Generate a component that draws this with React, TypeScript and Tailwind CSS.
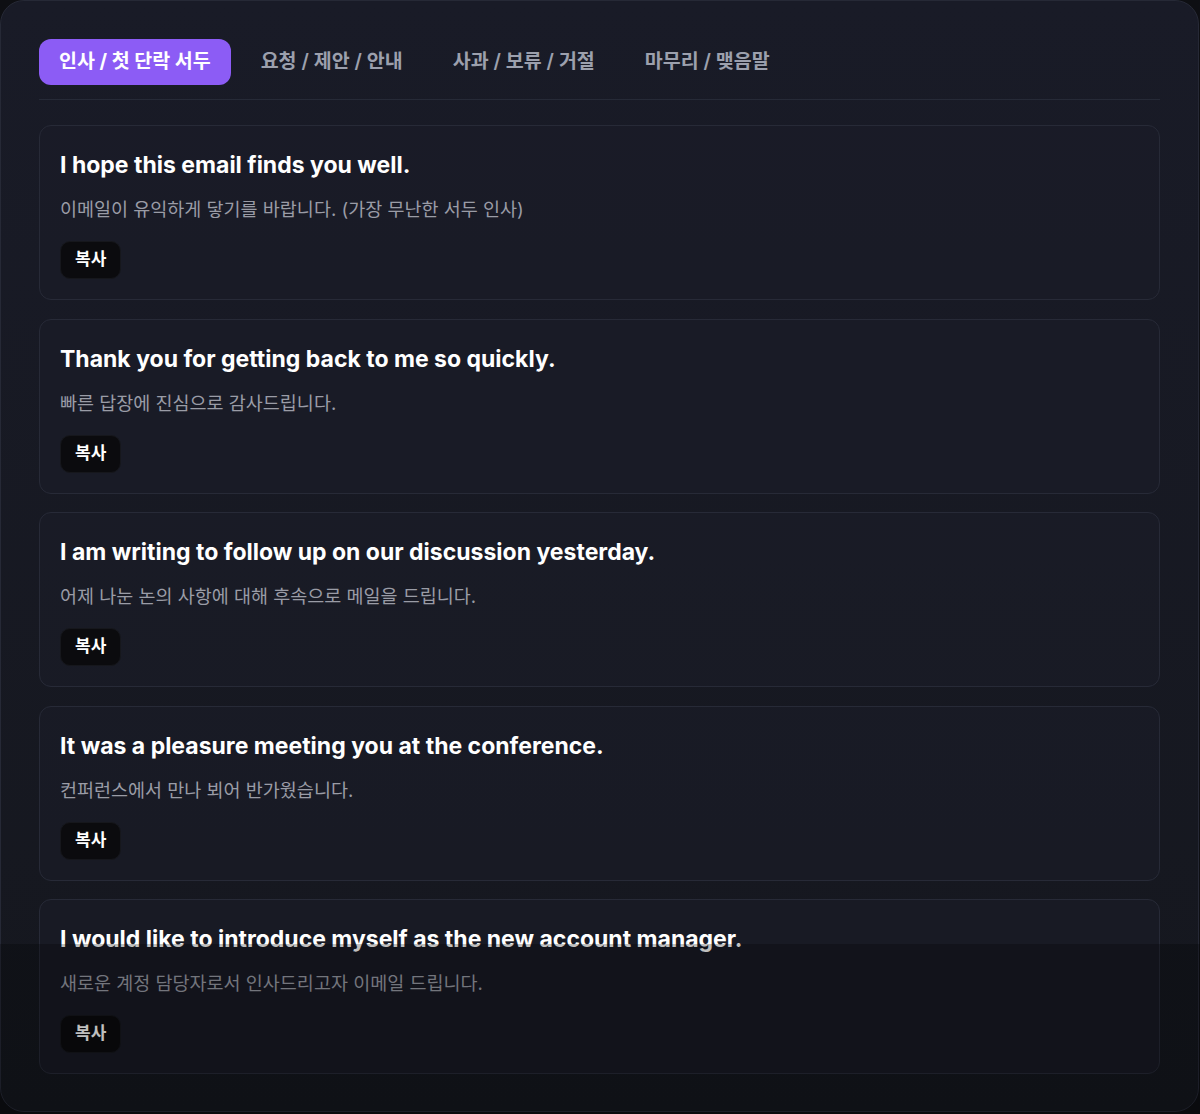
import { useState } from 'react'

const tabs = ['인사 / 첫 단락 서두', '요청 / 제안 / 안내', '사과 / 보류 / 거절', '마무리 / 맺음말']

const phrases = [
  { en: 'I hope this email finds you well.', ko: '이메일이 유익하게 닿기를 바랍니다. (가장 무난한 서두 인사)' },
  { en: 'Thank you for getting back to me so quickly.', ko: '빠른 답장에 진심으로 감사드립니다.' },
  { en: 'I am writing to follow up on our discussion yesterday.', ko: '어제 나눈 논의 사항에 대해 후속으로 메일을 드립니다.' },
  { en: 'It was a pleasure meeting you at the conference.', ko: '컨퍼런스에서 만나 뵈어 반가웠습니다.' },
  { en: 'I would like to introduce myself as the new account manager.', ko: '새로운 계정 담당자로서 인사드리고자 이메일 드립니다.' },
]

export default function App() {
  const [active, setActive] = useState(0)

  return (
    <div
      className="relative min-h-[1114px] bg-[#0e0f13]"
      style={{ fontFamily: 'Inter, "Noto Sans CJK KR", sans-serif' }}
    >
      <div className="w-[1199px] rounded-3xl border border-[#262936] bg-gradient-to-b from-[#191b27] to-[#15171e] px-[38px] pt-[38px] pb-[37px]">
        {/* Tabs */}
        <div className="flex gap-2.5 border-b border-[#262a37] pb-[14px]">
          {tabs.map((t, i) => (
            <button
              key={t}
              onClick={() => setActive(i)}
              className={
                i === active
                  ? 'h-[46px] rounded-xl bg-[#8c5cf5] px-5 text-[19.5px] font-bold text-white'
                  : 'h-[46px] rounded-xl px-5 text-[19.5px] font-semibold text-[#9ca0ad]'
              }
            >
              {t}
            </button>
          ))}
        </div>

        {/* Phrase cards */}
        <div className="mt-[25px] flex flex-col gap-[18.5px]">
          {phrases.map((p) => (
            <div key={p.en} className="rounded-xl border border-[#272a37] bg-[#1a1c28]/60 px-5 pt-[22px] pb-5">
              <div className="text-[23px] font-bold leading-[34px] text-white">{p.en}</div>
              <div className="mt-[13px] text-[18.5px] leading-[28px] text-[#9a9ca6]">{p.ko}</div>
              <button className="mt-[18px] h-[38px] rounded-[10px] border border-[#16171c] bg-[#0b0b0e] px-[14px] text-[17px] font-bold text-white">
                복사
              </button>
            </div>
          ))}
        </div>
      </div>

      {/* bottom shade */}
      <div className="pointer-events-none absolute inset-x-0 bottom-0 h-[170px] bg-black/25" />
    </div>
  )
}
